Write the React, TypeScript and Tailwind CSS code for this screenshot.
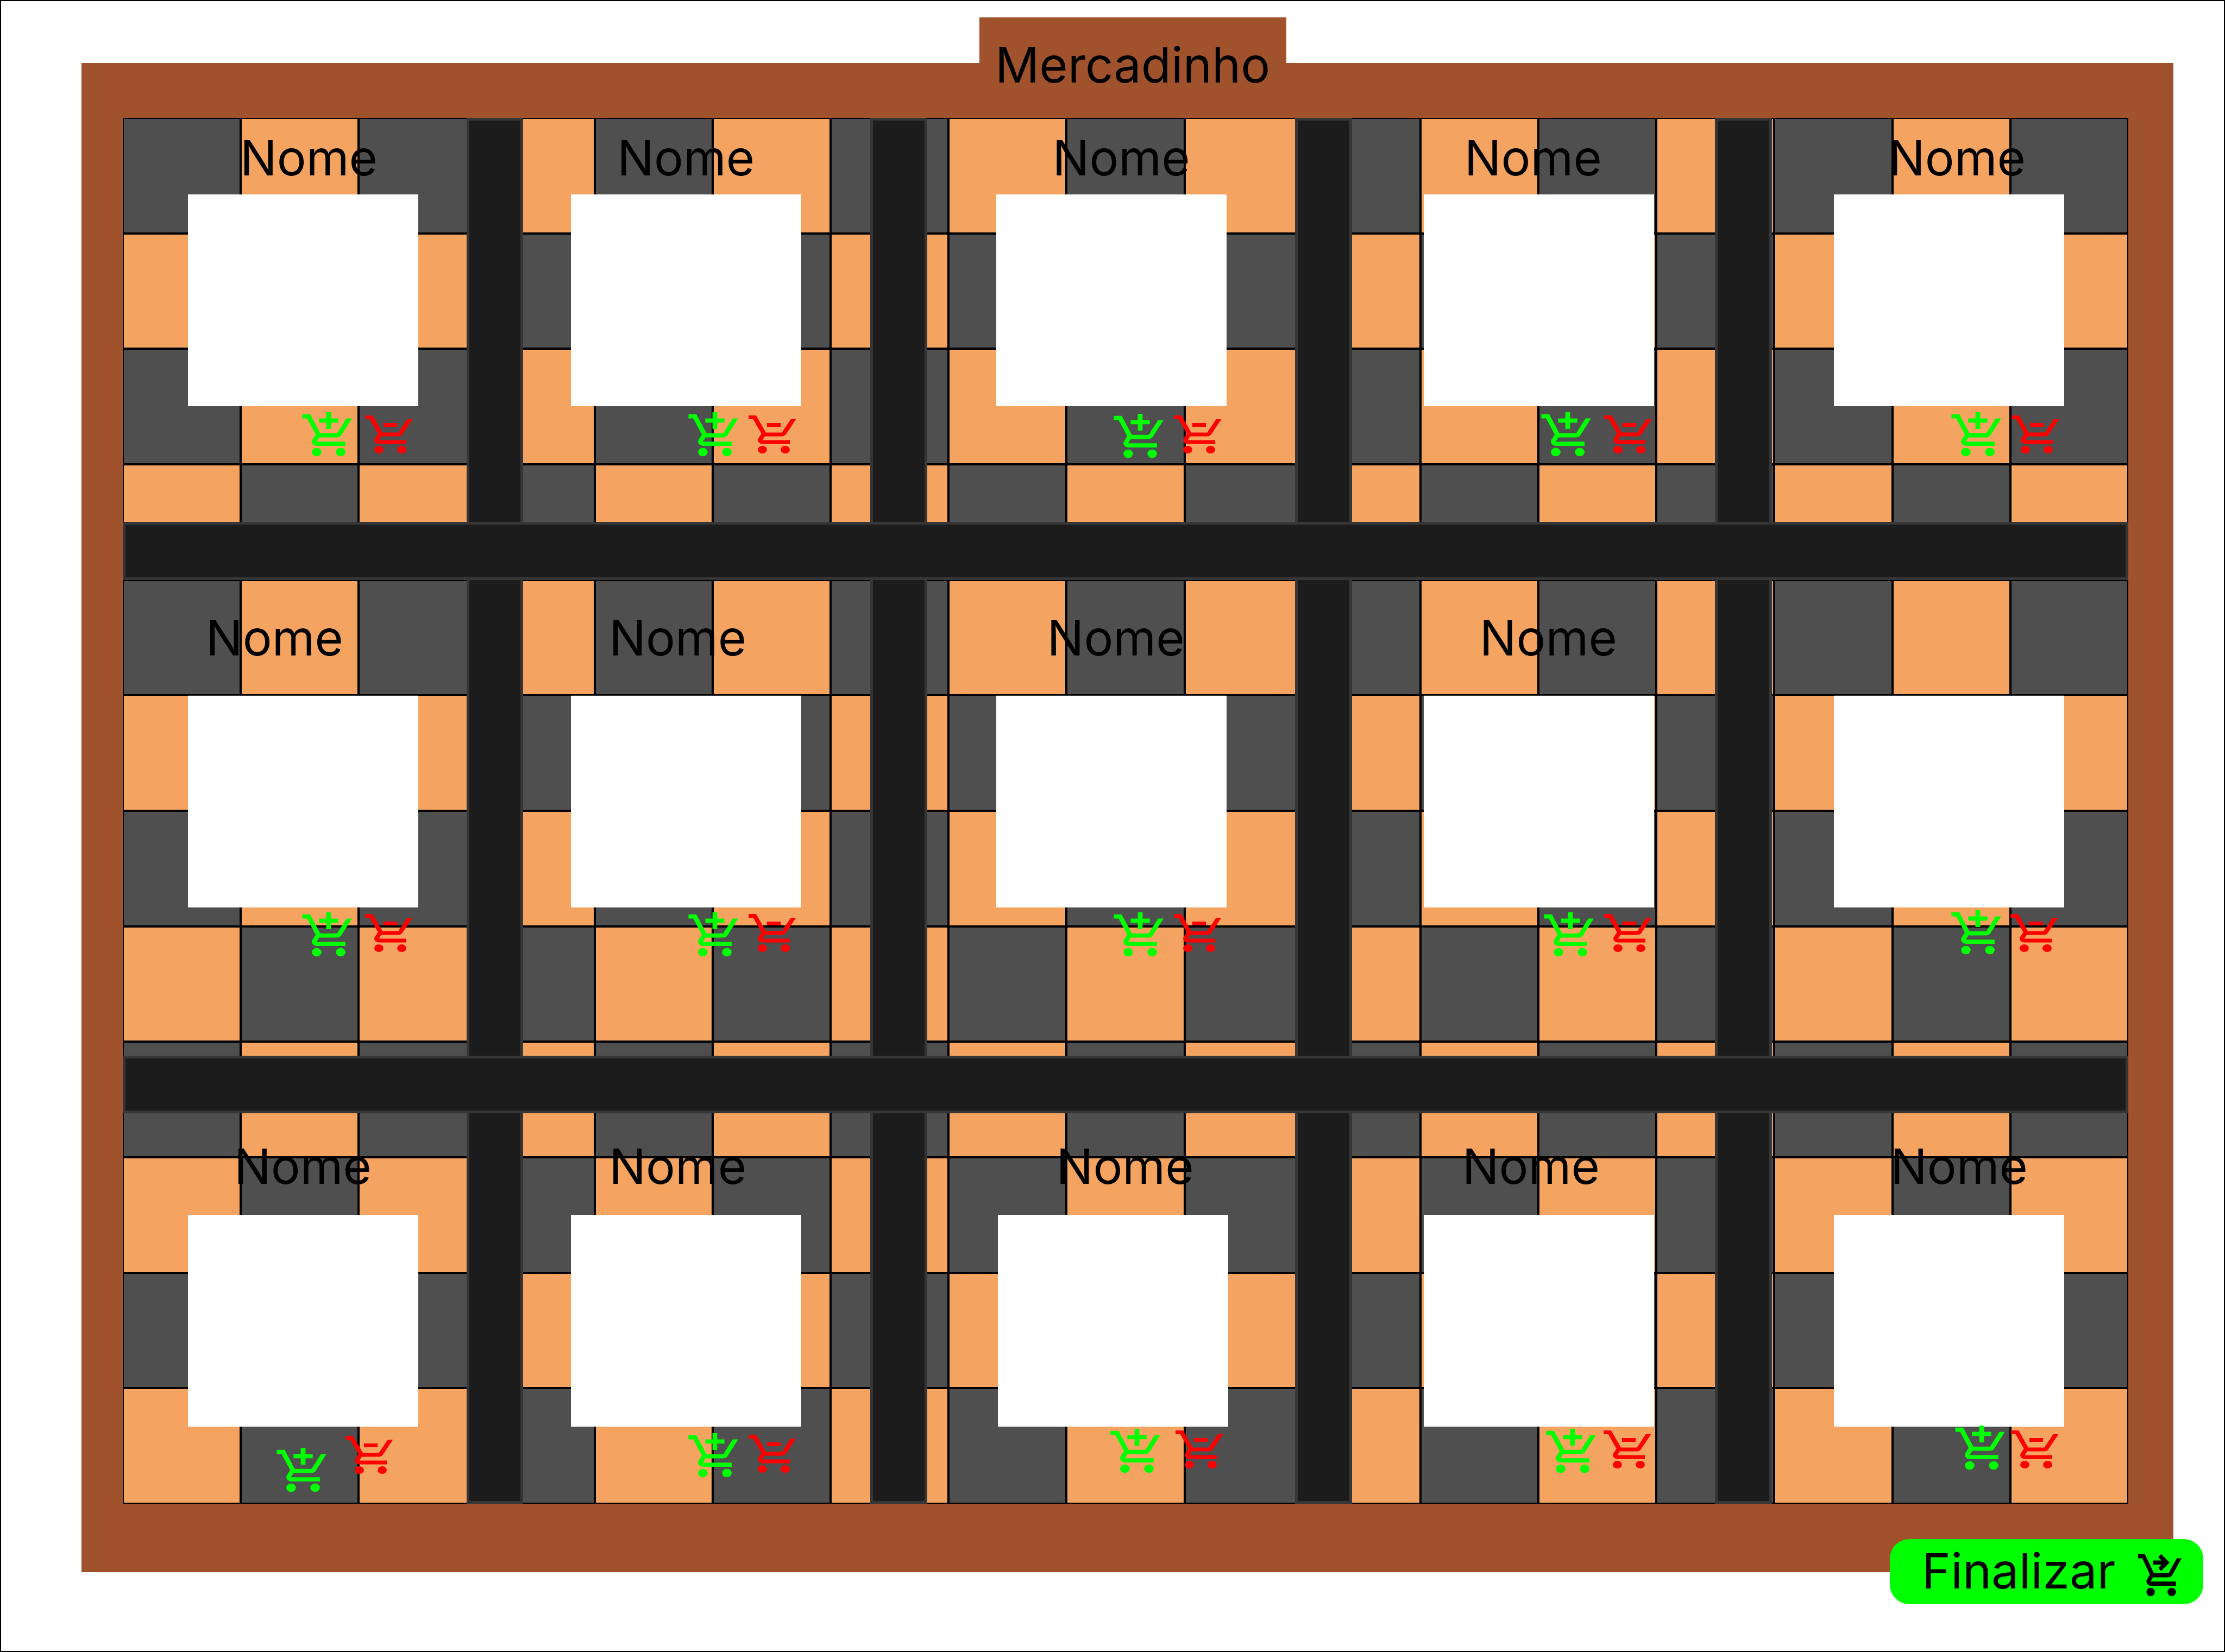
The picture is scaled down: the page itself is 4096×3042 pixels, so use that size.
import React from "react";

type Product = {
  id: number;
  name?: string;
  area: string;
  nameAt: string;
  imageAt: string;
  cartsAt: string;
  addAt: string;
  removeAt: string;
};

/* Each shelf row shares one header height above its product images. */
const shelves: { header: string; products: Product[] }[] = [
  {
    header: "h-[141px] pt-[19px]",
    products: [
      { id: 1, name: "Nome", area: "col-start-1 row-start-1", nameAt: "pl-[216px]", imageAt: "ml-[120px]", cartsAt: "pl-[326px] gap-[10px]", addAt: "mt-[7px]", removeAt: "mt-[10px]" },
      { id: 2, name: "Nome", area: "col-start-3 row-start-1", nameAt: "pl-[173px]", imageAt: "ml-[88px]", cartsAt: "pl-[300px] gap-[5px]", addAt: "mt-[7px]", removeAt: "mt-[10px]" },
      { id: 3, name: "Nome", area: "col-start-5 row-start-1", nameAt: "pl-[231px]", imageAt: "ml-[127px]", cartsAt: "pl-[339px] gap-[5px]", addAt: "mt-[10px]", removeAt: "mt-[10px]" },
      { id: 4, name: "Nome", area: "col-start-7 row-start-1", nameAt: "pl-[207px]", imageAt: "ml-[132px]", cartsAt: "pl-[344px] gap-[10px]", addAt: "mt-[7px]", removeAt: "mt-[10px]" },
      { id: 5, name: "Nome", area: "col-start-9 row-start-1", nameAt: "pl-[214px]", imageAt: "ml-[114px]", cartsAt: "pl-[326px] gap-[5px]", addAt: "mt-[7px]", removeAt: "mt-[10px]" },
    ],
  },
  {
    header: "h-[213px] pt-[52px]",
    products: [
      { id: 6, name: "Nome", area: "col-start-1 row-start-3", nameAt: "pl-[153px]", imageAt: "ml-[120px]", cartsAt: "pl-[326px] gap-[10px]", addAt: "mt-[5px]", removeAt: "mt-[5px]" },
      { id: 7, name: "Nome", area: "col-start-3 row-start-3", nameAt: "pl-[158px]", imageAt: "ml-[88px]", cartsAt: "pl-[300px] gap-[5px]", addAt: "mt-[5px]", removeAt: "mt-[5px]" },
      { id: 8, name: "Nome", area: "col-start-5 row-start-3", nameAt: "pl-[221px]", imageAt: "ml-[127px]", cartsAt: "pl-[339px] gap-[5px]", addAt: "mt-[5px]", removeAt: "mt-[5px]" },
      { id: 9, name: "Nome", area: "col-start-7 row-start-3", nameAt: "pl-[235px]", imageAt: "ml-[132px]", cartsAt: "pl-[349px] gap-[5px]", addAt: "mt-[5px]", removeAt: "mt-[5px]" },
      { id: 10, area: "col-start-9 row-start-3", nameAt: "pl-[214px]", imageAt: "ml-[114px]", cartsAt: "pl-[326px] gap-[3px]", addAt: "mt-[1px]", removeAt: "mt-[5px]" },
    ],
  },
  {
    header: "h-[187px] pt-[43px]",
    products: [
      { id: 11, name: "Nome", area: "col-start-1 row-start-5", nameAt: "pl-[205px]", imageAt: "ml-[120px]", cartsAt: "pl-[279px] gap-[21px]", addAt: "mt-[35px]", removeAt: "mt-[10px]" },
      { id: 12, name: "Nome", area: "col-start-3 row-start-5", nameAt: "pl-[158px]", imageAt: "ml-[88px]", cartsAt: "pl-[300px] gap-[5px]", addAt: "mt-[8px]", removeAt: "mt-[8px]" },
      { id: 13, name: "Nome", area: "col-start-5 row-start-5", nameAt: "pl-[238px]", imageAt: "ml-[130px]", cartsAt: "pl-[333px] gap-[14px]", addAt: "mt-0", removeAt: "mt-0" },
      { id: 14, name: "Nome", area: "col-start-7 row-start-5", nameAt: "pl-[203px]", imageAt: "ml-[132px]", cartsAt: "pl-[353px]", addAt: "mt-0", removeAt: "mt-0" },
      { id: 15, name: "Nome", area: "col-start-9 row-start-5", nameAt: "pl-[218px]", imageAt: "ml-[114px]", cartsAt: "pl-[333px]", addAt: "-mt-[6px]", removeAt: "-ml-[3px] mt-0" },
    ],
  },
];

const CART =
  "M280-80q-33 0-56.5-23.5T200-160q0-33 23.5-56.5T280-240q33 0 56.5 23.5T360-160q0 33-23.5 56.5T280-80Zm400 0q-33 0-56.5-23.5T600-160q0-33 23.5-56.5T680-240q33 0 56.5 23.5T760-160q0 33-23.5 56.5T680-80ZM40-800v-80h131l170 360h280l156-280h91L692-482q-11 20-29.5 31T622-440H324l-44 80h480v80H280q-45 0-68-39.5t-2-78.5l54-98-144-304H40Z";
const PLUS = "M440-600v-120H320v-80h120v-120h80v120h120v80H520v120h-80Z";
const MINUS = "M360-720h240v80H360Z";
const ARROW = "m480-560-56-56 63-64H320v-80h167l-64-64 57-56 160 160-160 160Z";

function CartIcon({ mark, className }: { mark: string; className: string }) {
  return (
    <svg viewBox="0 -960 960 960" preserveAspectRatio="none" fill="currentColor" aria-hidden="true" className={className}>
      <path d={CART} />
      <path d={mark} />
    </svg>
  );
}

function TiledFloor() {
  return (
    <div className="grid grid-cols-[repeat(17,1fr)] grid-rows-[repeat(12,1fr)] [grid-area:1/1]" aria-hidden="true">
      {Array.from({ length: 17 * 12 }, (_, i) => {
        const dark = ((i % 17) + Math.floor(i / 17)) % 2 === 0;
        return <div key={i} className={dark ? "border-2 border-black bg-[#4f4f4f]" : "border-2 border-black bg-[#f4a460]"} />;
      })}
    </div>
  );
}

function ProductSlot({ product, header }: { product: Product; header: string }) {
  return (
    <article className={`min-w-0 ${product.area}`}>
      <div className={header}>
        {product.name && <h2 className={`text-[90px] leading-[109px] ${product.nameAt}`}>{product.name}</h2>}
      </div>
      <div className={`h-[390px] w-[424px] bg-white ${product.imageAt}`} />
      <div className={`flex items-start ${product.cartsAt}`}>
        <button type="button" aria-label="Adicionar ao carrinho" className={`shrink-0 text-[#00ff00] ${product.addAt}`}>
          <CartIcon mark={PLUS} className="block h-[93px] w-[106px]" />
        </button>
        <button type="button" aria-label="Remover do carrinho" className={`shrink-0 text-[#ff0000] ${product.removeAt}`}>
          <CartIcon mark={MINUS} className="block h-[84px] w-[101px]" />
        </button>
      </div>
    </article>
  );
}

export default function App() {
  return (
    <main className="flex min-h-screen flex-col border-2 border-black bg-white pt-[30px] font-['Inter',sans-serif] text-black">
      <header className="z-10 -mb-[58px] flex justify-center pl-[74px]">
        <h1 className="w-[565px] bg-[#a0522d] pt-[33px] text-center text-[90px] leading-[109px]">Mercadinho</h1>
      </header>

      <section className="ml-[148px] mr-[93px] flex flex-1 bg-[#a0522d] pb-[126px] pl-[76px] pr-[83px] pt-[101px]">
        <div className="grid flex-1">
          <TiledFloor />
          <div className="grid grid-cols-[702fr_116fr_709fr_116fr_752fr_116fr_742fr_116fr_728fr] grid-rows-[826fr_118fr_972fr_118fr_798fr] [grid-area:1/1]">
            <div className="col-start-2 row-span-5 row-start-1 border-[5px] border-[#363636] bg-[#1c1c1c]" />
            <div className="col-start-4 row-span-5 row-start-1 border-[5px] border-[#363636] bg-[#1c1c1c]" />
            <div className="col-start-6 row-span-5 row-start-1 border-[5px] border-[#363636] bg-[#1c1c1c]" />
            <div className="col-start-8 row-span-5 row-start-1 border-[5px] border-[#363636] bg-[#1c1c1c]" />
            <div className="col-span-9 col-start-1 row-start-2 border-[5px] border-[#363636] bg-[#1c1c1c]" />
            <div className="col-span-9 col-start-1 row-start-4 border-[5px] border-[#363636] bg-[#1c1c1c]" />
            {shelves.map((shelf) =>
              shelf.products.map((product) => <ProductSlot key={product.id} product={product} header={shelf.header} />),
            )}
          </div>
        </div>
      </section>

      <footer className="z-10 -mt-[61px] mb-[86px] flex justify-end pr-[38px]">
        <button
          type="button"
          className="flex h-[120px] w-[577px] items-center justify-between rounded-[36px] bg-[#00ff00] pb-1 pl-[59px] pr-[31px] text-[90px] leading-[109px]"
        >
          <span>Finalizar</span>
          <CartIcon mark={ARROW} className="mt-4 block h-[93px] w-[93px] shrink-0" />
        </button>
      </footer>
    </main>
  );
}
